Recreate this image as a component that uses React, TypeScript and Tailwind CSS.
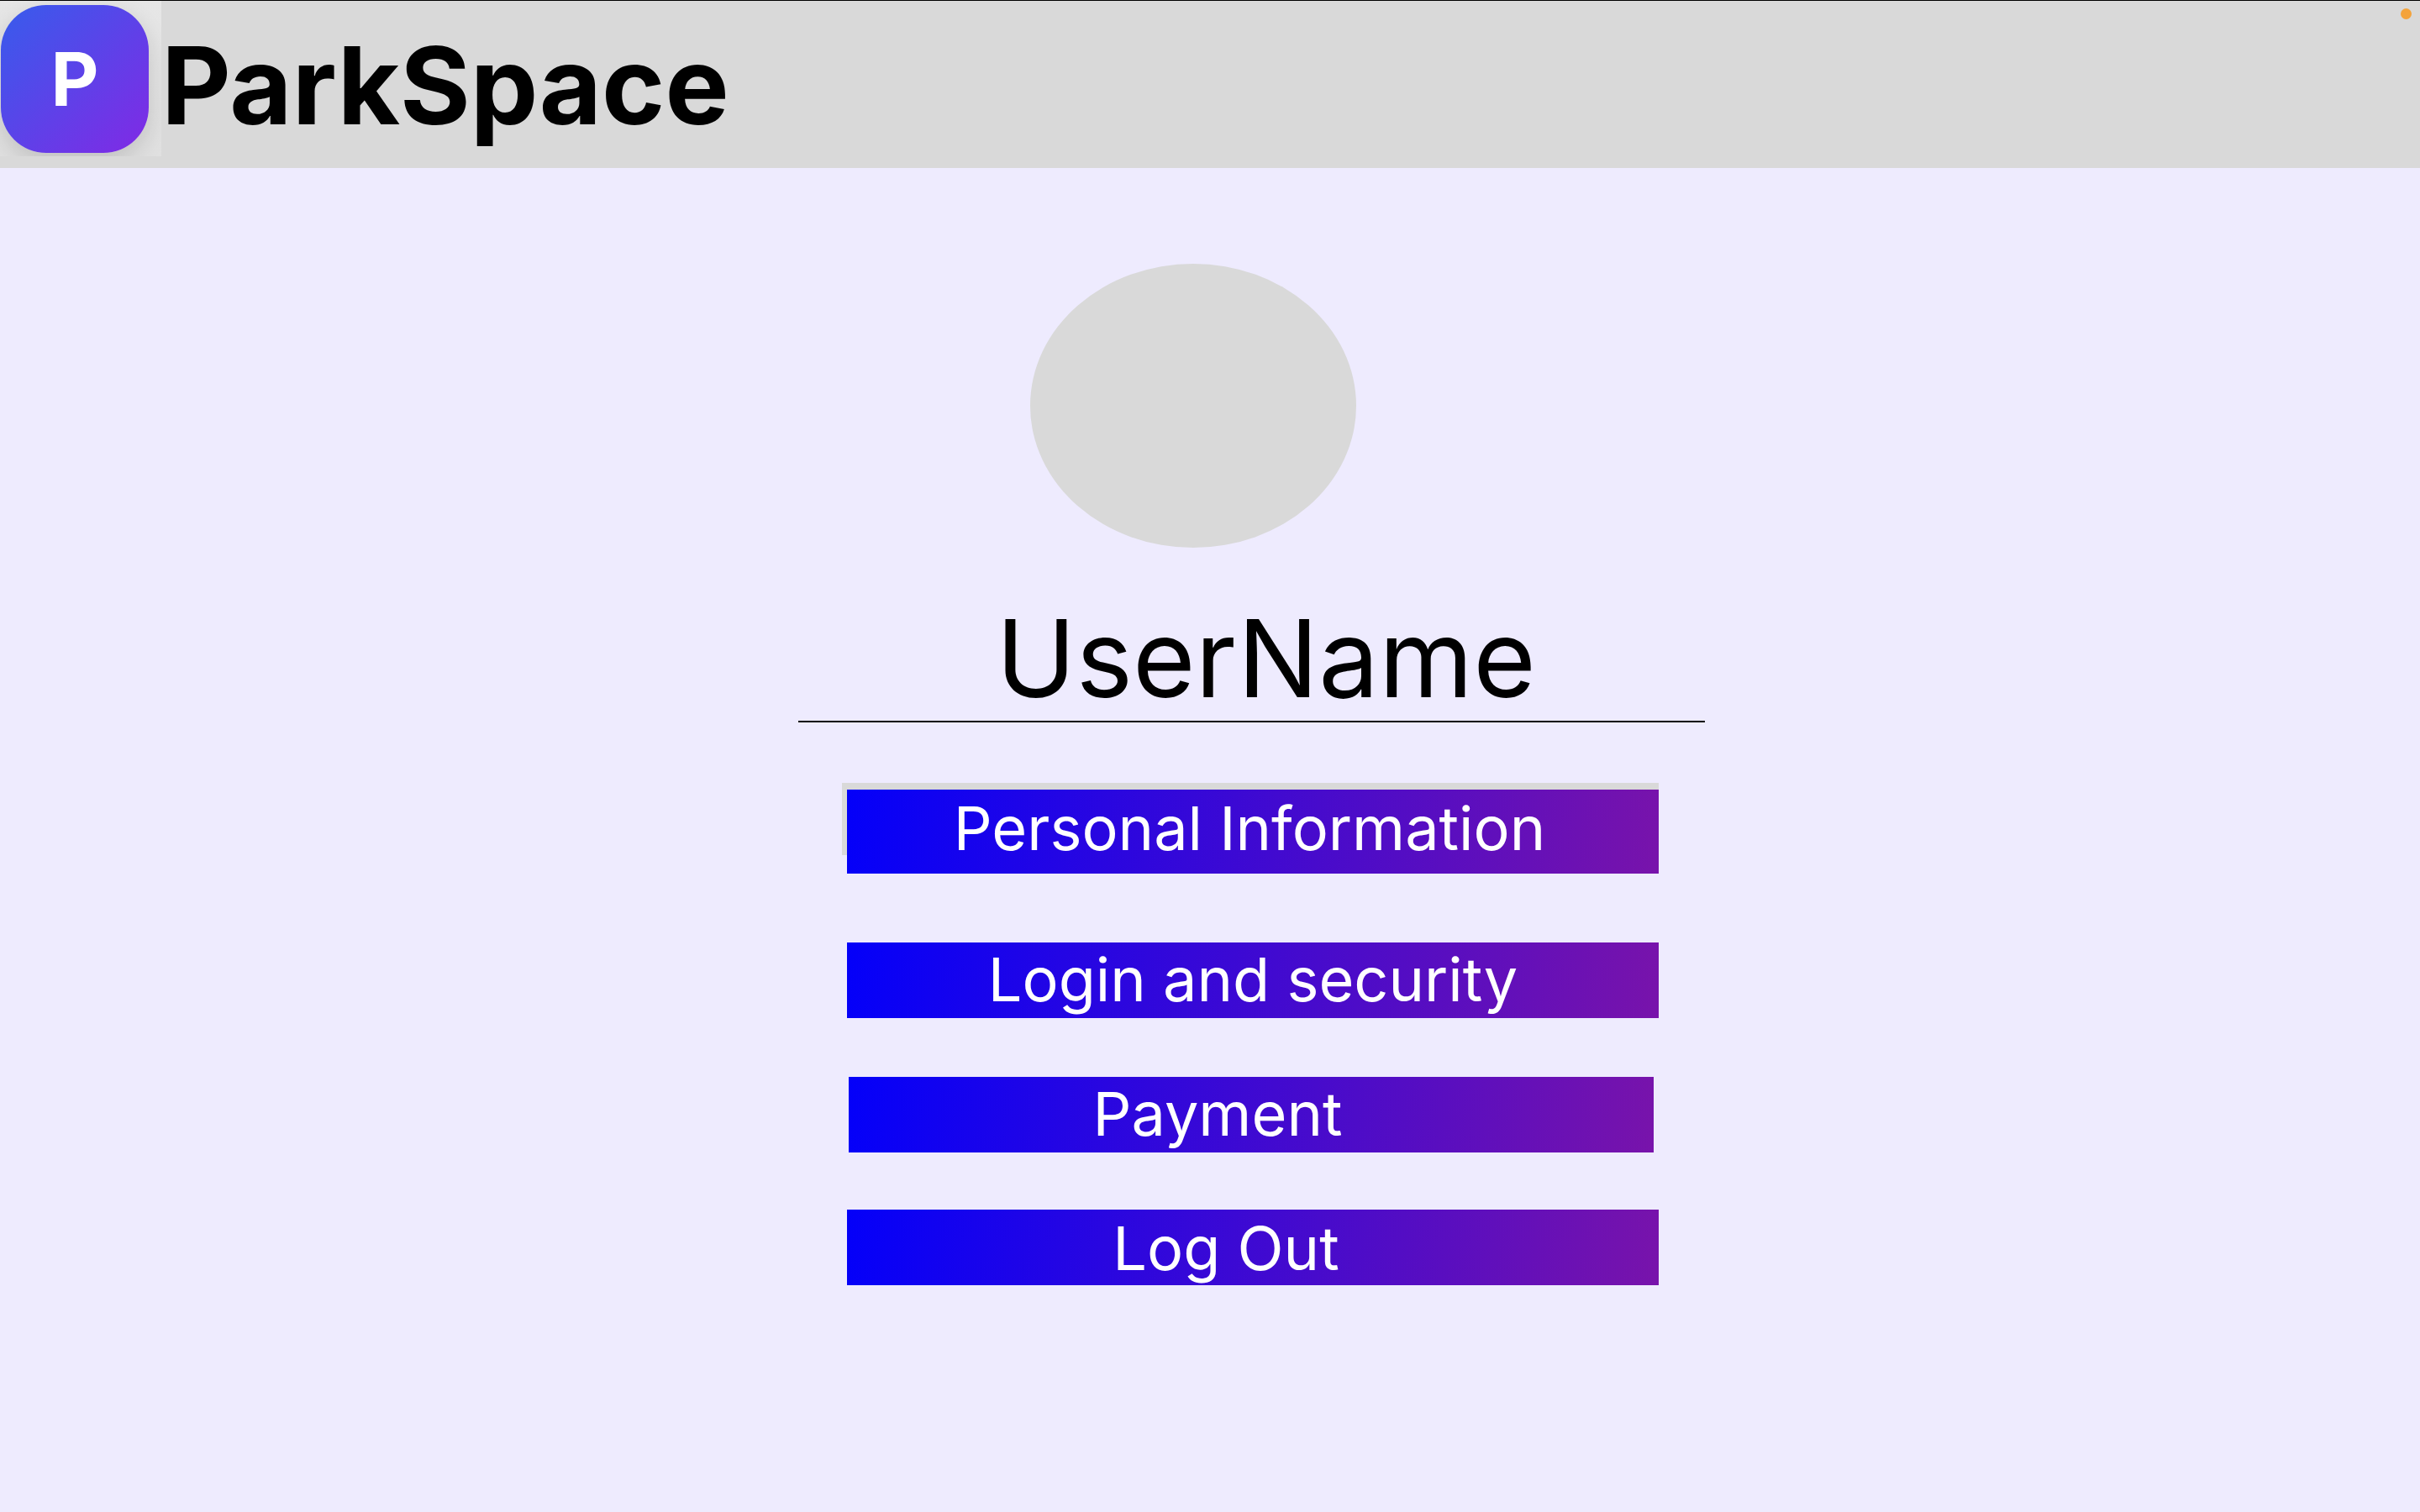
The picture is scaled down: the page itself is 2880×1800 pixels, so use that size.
const barClass =
  "relative flex w-full items-start justify-center bg-[linear-gradient(95deg,#0400f9_0%,#7813ab_100%)] text-[72px] leading-[88px] text-white";

function Logo() {
  return (
    <div className="flex h-[185px] w-[192px] shrink-0 items-start overflow-hidden bg-[linear-gradient(180deg,#e6e6e6,#e0e0e0)] pt-[5px] pl-px">
      <div className="flex size-[176px] items-center justify-center rounded-[54px] bg-[linear-gradient(135deg,#375cec,#8129e5)] text-[88px] leading-none font-bold text-white shadow-[0_10px_28px_rgba(0,0,0,0.14)]">
        P
      </div>
    </div>
  );
}

function Header() {
  return (
    <header className="relative flex h-[200px] items-start border-t border-black bg-[#d9d9d9]">
      <Logo />
      <h1 className="pt-[23px] text-[128px] leading-[155px] font-bold text-black">ParkSpace</h1>
      <span className="absolute top-[9px] right-[10px] size-[13px] rounded-full bg-[#f4a33b]" />
    </header>
  );
}

export default function App() {
  return (
    <div className="min-h-screen bg-[#eeebfe] font-[Inter,sans-serif]">
      <Header />
      <main className="flex flex-col items-center pt-[114px] pb-16 pl-[99px]">
        <div className="mr-[139px] h-[338px] w-[388px] rounded-[50%] bg-[#d9d9d9]" />
        <section className="mt-[54px] w-full max-w-[1079px]">
          <h2 className="h-[154px] border-b-2 border-black pl-[34px] text-center text-[128px] leading-[155px] font-normal text-black">
            UserName
          </h2>
          <nav aria-label="Account" className="flex flex-col pt-20 pr-[55px] pl-[58px] font-normal">
            <div className="relative">
              <span className="absolute -top-2 right-0 -left-1.5 h-[86px] bg-[#d9d9d9]" />
              <button type="button" className={`${barClass} h-[100px] pt-0.5 pr-2`}>
                Personal Information
              </button>
            </div>
            <button type="button" className={`${barClass} mt-[82px] h-[90px]`}>
              Login and security
            </button>
            <div className="mt-[70px] pr-1.5 pl-0.5">
              <button type="button" className={`${barClass} h-[90px] pr-20`}>
                Payment
              </button>
            </div>
            <button type="button" className={`${barClass} mt-[68px] h-[90px] pt-0.5 pr-16`}>
              Log Out
            </button>
          </nav>
        </section>
      </main>
    </div>
  );
}
